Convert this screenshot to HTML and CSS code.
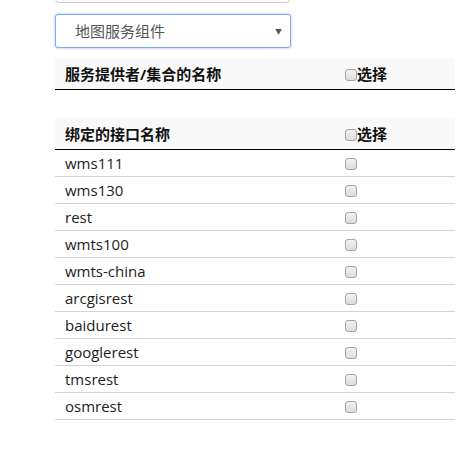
FILE: index.html
```html
<!DOCTYPE html>
<html lang="zh-CN">
<head>
    <meta charset="UTF-8">
    <title>地图服务组件</title>
    <link rel="stylesheet" href="styles.css">
</head>
<body>

<div class="panel">
    <input type="text" class="form-input">
    <div class="select-wrap">
        <select class="form-select">
            <option>地图服务组件</option>
        </select>
        <span class="select-arrow">▼</span>
    </div>

    <table class="grid grid-provider">
        <thead>
            <tr>
                <th class="col-name">服务提供者/集合的名称</th>
                <th class="col-check"><input type="checkbox" class="chk">选择</th>
            </tr>
        </thead>
        <tbody></tbody>
    </table>

    <table class="grid">
        <thead>
            <tr>
                <th class="col-name">绑定的接口名称</th>
                <th class="col-check"><input type="checkbox" class="chk">选择</th>
            </tr>
        </thead>
        <tbody id="bindList"></tbody>
    </table>
</div>

<script>
    const bindNames = ['wms111', 'wms130', 'rest', 'wmts100', 'wmts-china',
        'arcgisrest', 'baidurest', 'googlerest', 'tmsrest', 'osmrest'];

    const bindList = document.getElementById('bindList');
    bindNames.forEach(name => {
        const row = document.createElement('tr');
        row.innerHTML = `
            <td class="col-name">${name}</td>
            <td class="col-check"><input type="checkbox" class="chk"></td>
        `;
        bindList.appendChild(row);
    });
</script>

</body>
</html>
```

FILE: styles.css
```css
body {
    font-family: "Open Sans", "Noto Sans CJK SC", sans-serif;
    background-color: #fff;
    color: #333;
    margin: 0;
}
.panel {
    width: 400px;
    margin: -31px 0 0 55px;
}
.form-input {
    display: block;
    box-sizing: border-box;
    width: 235px;
    height: 34px;
    border: 1px solid #ccc;
    border-radius: 4px;
    margin: 0;
}
.select-wrap {
    position: relative;
    width: 236px;
    margin-top: 11px;
}
.form-select {
    display: block;
    box-sizing: border-box;
    width: 236px;
    height: 34px;
    padding: 0 0 0 19px;
    font-family: "Open Sans", "Noto Sans CJK SC", sans-serif;
    font-size: 15px;
    color: #555;
    background-color: #fff;
    border: 1px solid #7faaf0;
    border-radius: 3px;
    box-shadow: 0 0 3px rgba(102, 150, 233, .6);
    appearance: none;
    -webkit-appearance: none;
    outline: none;
}
.select-arrow {
    position: absolute;
    right: 9px;
    top: 12px;
    font-size: 7px;
    color: #555;
    pointer-events: none;
}
.grid {
    width: 400px;
    border-collapse: collapse;
    font-size: 15px;
    margin-top: 10px;
}
.grid-provider {
    margin-bottom: 28px;
}
.grid + .grid {
    margin-top: 0;
}
.grid th {
    height: 31px;
    padding: 0 10px;
    text-align: left;
    font-weight: bold;
    color: #111;
    background-color: #f9f9f9;
    border-bottom: 1px solid #000;
}
.grid td {
    height: 26px;
    padding: 0 10px;
    color: #222;
    border-bottom: 1px solid #d4d4d4;
}
.col-name {
    width: 260px;
}
.chk {
    appearance: none;
    -webkit-appearance: none;
    box-sizing: border-box;
    width: 12px;
    height: 12px;
    margin: 0;
    vertical-align: -1px;
    border: 1px solid #a5a5a5;
    border-radius: 3px;
    background: linear-gradient(#f2f2f2, #dcdcdc);
}
```
